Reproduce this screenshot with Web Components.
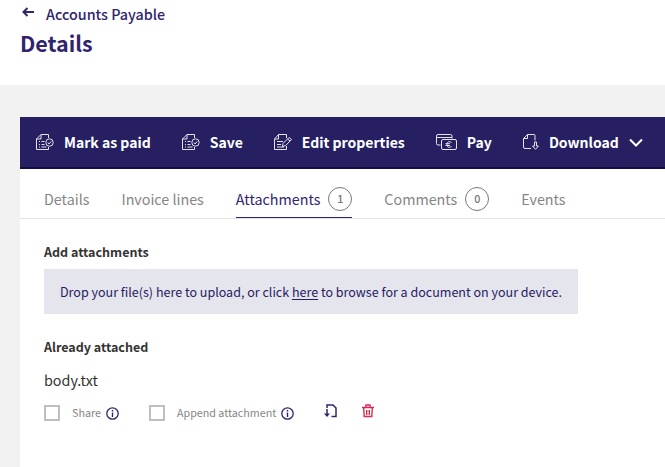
<!DOCTYPE html>
<html lang="en">
<head>
<meta charset="utf-8">
<title>Accounts Payable – Details</title>
<style>
  html, body { margin: 0; }
  body { background: #f2f2f2; font-family: "Noto Sans CJK SC", "Noto Sans", sans-serif; font-size-adjust: 0.486; color: #333; }
</style>
</head>
<body>
<invoice-page></invoice-page>

<script>
const icons = {
  back: [12, 10, '<path d="M5.5 1 1.500 5l4 4M2 5h10" fill="none" stroke="currentColor" stroke-width="2"/>'],
  approve: [18, 16, '<g fill="none" stroke="#e4e3ee"><path d="M12.500 4V.500H5L.500 5v10.500h12V13M5 .500V5H.500M3 7.500h1M3 10.500h1M3 13h1M5.500 7.500h3M5.500 10.500h3M5.500 13h5"/><circle cx="13.500" cy="8.500" r="3.700"/><path d="m11.800 8.500 1.300 1.500 2.200-2.700"/></g>'],
  edit: [18, 16, '<g fill="none" stroke="#e4e3ee"><path d="M12.500 4V.500H4.500L.500 5v10.500h12V12M4.500 .500V5H.500M3 7.500h6M3 10.500h4M3 13h7"/><path d="m9 9.500 6-6 2.500 2-6 6.200-3 .8zM13.500 5l2.500 2"/></g>'],
  pay: [21, 16, '<g fill="none" stroke="#e4e3ee"><path d="M4.500 11H2Q.500 11 .500 9.500V2Q.500 .500 2 .500h12.500Q16 .500 16 2v2.500M.500 3.500H16"/><rect x="5.500" y="5.500" width="15" height="10" rx="1.500"/><path d="M15.500 8.500c-3-2-4.500 0-4.500 2s1.500 4 4.500 2M9.500 9.700h4.500M9.500 11.500h4.500"/></g>'],
  download: [16, 16, '<g fill="none" stroke="#e4e3ee"><path d="M8 14.500H2Q.500 14.500 .500 13V4.500L4.500 .500h6.500q1 0 1 1v5M4.500 .500v4H.500M11.500 8v4H9.500l3 3.300 3-3.300h-2V8z"/></g>'],
  chevron: [14, 9, '<path d="m1 1.500 6 6 6-6" fill="none" stroke="currentColor" stroke-width="2"/>'],
  info: [13, 13, '<circle cx="6.500" cy="6.500" r="5.700" fill="none" stroke="currentColor" stroke-width="1.300"/><path d="M6.500 3v1.500M6.500 5.500V10" stroke="currentColor" stroke-width="1.400"/>'],
  fetch: [13, 14, '<path d="M3 4V1h6l3 3v8.500H7.500M3 5v7" fill="none" stroke="currentColor" stroke-width="1.500"/><path d="M0 9.500h6L3 13z" fill="currentColor"/>'],
  trash: [12, 14, '<path d="M0 3.500h12M4 3V1h4v2M1.700 4l.5 8.500h7.600l.5-8.500M4.700 6v5M7.300 6v5" fill="none" stroke="currentColor" stroke-width="1.400"/>']
};

function define(name, css, html) {
  const template = document.createElement('template');
  template.innerHTML = `<style>*{box-sizing:border-box}button{font:inherit;font-size-adjust:inherit;color:inherit;background:none;border:0;padding:0;cursor:pointer}${css}</style>${html}`;
  customElements.define(name, class extends HTMLElement {
    constructor() {
      super();
      this.attachShadow({ mode: 'open' }).append(template.content.cloneNode(true));
    }
  });
}

customElements.define('ui-icon', class extends HTMLElement {
  connectedCallback() {
    if (this.shadowRoot) return;
    const [w, h, art] = icons[this.getAttribute('name')];
    this.attachShadow({ mode: 'open' }).innerHTML =
      `<style>:host{display:inline-flex;flex:none}svg{display:block}</style><svg width="${w}" height="${h}" viewBox="0 0 ${w} ${h}" aria-hidden="true">${art}</svg>`;
  }
});

define('page-header', `
  :host { display: block; background: #fff; color: #30246f; padding: 0 20px 28px; }
  a { display: flex; width: fit-content; align-items: center; gap: 12px; color: inherit; text-decoration: none; font-size: 16px; line-height: 28px; font-weight: 500; padding-left: 2px; }
  ui-icon { padding-bottom: 4px; }
  h1 { margin: 0; font-size: 24px; line-height: 29px; font-weight: 700; }`,
  `<a href="#accounts"><ui-icon name="back"></ui-icon><slot name="parent"></slot></a><h1><slot></slot></h1>`);

define('tool-bar', `
  :host { display: flex; gap: 31px; align-items: center; background: #262063; color: #fff; height: 52px; padding: 0 16px; border-bottom: 2px solid #130b43; font-size-adjust: none; }`,
  `<slot></slot>`);

define('tool-button', `
  :host { display: block; flex: none; }
  button { display: flex; align-items: center; gap: 10px; font-size: 14px; line-height: 24px; font-weight: 700; white-space: nowrap; }`,
  `<button type="button"><slot name="icon"></slot><slot></slot><slot name="end"></slot></button>`);

define('tab-list', `
  :host { display: flex; gap: 32px; padding: 12px 24px 0; border-bottom: 1px solid #e3e3e3; }`,
  `<slot></slot>`);

define('tab-item', `
  :host { display: block; flex: none; color: #858585; }
  :host([selected]) { color: #30246f; }
  button { display: flex; align-items: center; gap: 8px; font-size: 16px; line-height: 36px; white-space: nowrap; border-bottom: 1px solid transparent; }
  :host([selected]) button { border-color: #30208a; }`,
  `<button type="button"><slot></slot><slot name="count"></slot></button>`);

define('count-badge', `
  :host { display: block; box-sizing: border-box; width: 24px; height: 24px; border: 1px solid #777; border-radius: 50%; color: #777; font-size: 12px; line-height: 22px; text-align: center; font-weight: 500; }`,
  `<slot></slot>`);

define('drop-zone', `
  :host { display: block; width: fit-content; background: #e5e5ed; color: #262063; font-size: 14px; line-height: 21px; padding: 12px 16px; }
  ::slotted(a) { color: inherit; text-underline-offset: 2px; }`,
  `<slot></slot>`);

define('check-option', `
  :host { display: flex; align-items: center; gap: 5px; }
  label { display: flex; align-items: center; gap: 12px; color: #858585; font-size: 12px; line-height: 20px; white-space: nowrap; }
  input { appearance: none; width: 16px; height: 16px; margin: 0; border: 2px solid #bfbfbf; background: #fff; }
  input:checked { background: #30246f; }
  button { display: flex; color: #30246f; }`,
  `<label><input type="checkbox"><slot></slot></label><button type="button" aria-label="More information"><ui-icon name="info"></ui-icon></button>`);

define('attached-file', `
  :host { display: block; }
  .name { font-size: 16px; line-height: 24px; }
  .row { display: flex; gap: 30px; margin-top: 11px; align-items: center; }
  .actions { display: flex; gap: 25px; padding-bottom: 5px; }
  .actions button { display: flex; color: #30246f; }
  .actions .remove { color: #e0294f; }`,
  `<div class="name"><slot></slot></div>
   <div class="row"><check-option>Share</check-option><check-option>Append attachment</check-option>
   <div class="actions"><button type="button" aria-label="Download file"><ui-icon name="fetch"></ui-icon></button><button type="button" class="remove" aria-label="Delete file"><ui-icon name="trash"></ui-icon></button></div></div>`);

define('invoice-page', `
  :host { display: flex; flex-direction: column; min-height: 100vh; }
  main { flex: 1; display: flex; flex-direction: column; margin: 32px 0 0 20px; }
  .panel { flex: 1; background: #fff; }
  .content { padding: 22px 24px; }
  h2 { margin: 0 0 7px; font-size: 14px; line-height: 21px; font-weight: 700; color: #333; }
  drop-zone { margin-bottom: 22px; }
  .attached { margin-bottom: 11px; }`,
  `<page-header><span slot="parent">Accounts Payable</span>Details</page-header>
  <main>
    <tool-bar>
      <tool-button><ui-icon slot="icon" name="approve"></ui-icon>Mark as paid</tool-button>
      <tool-button><ui-icon slot="icon" name="approve"></ui-icon>Save</tool-button>
      <tool-button><ui-icon slot="icon" name="edit"></ui-icon>Edit properties</tool-button>
      <tool-button><ui-icon slot="icon" name="pay"></ui-icon>Pay</tool-button>
      <tool-button><ui-icon slot="icon" name="download"></ui-icon>Download<ui-icon slot="end" name="chevron"></ui-icon></tool-button>
    </tool-bar>
    <div class="panel">
      <tab-list>
        <tab-item>Details</tab-item>
        <tab-item>Invoice lines</tab-item>
        <tab-item selected>Attachments<count-badge slot="count">1</count-badge></tab-item>
        <tab-item>Comments<count-badge slot="count">0</count-badge></tab-item>
        <tab-item>Events</tab-item>
      </tab-list>
      <div class="content">
        <h2>Add attachments</h2>
        <drop-zone>Drop your file(s) here to upload, or click <a href="#browse">here</a> to browse for a document on your device.</drop-zone>
        <h2 class="attached">Already attached</h2>
        <attached-file>body.txt</attached-file>
      </div>
    </div>
  </main>`);
</script>
</body>
</html>
